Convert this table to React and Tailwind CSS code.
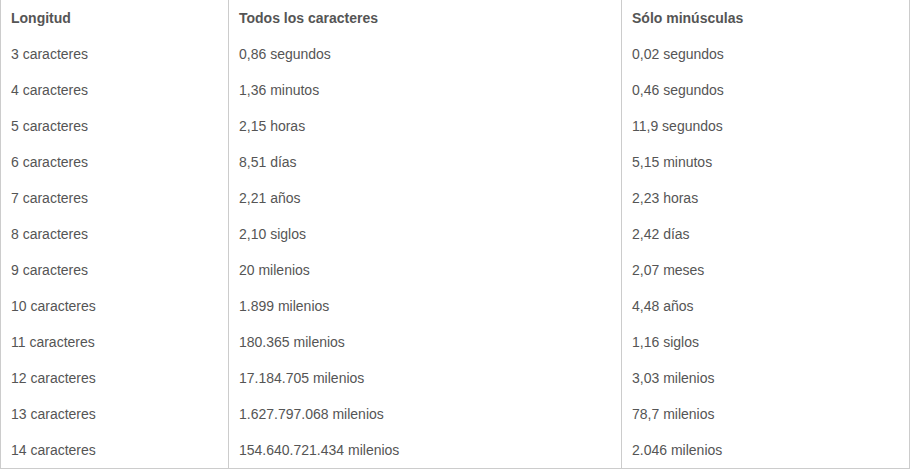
import React from 'react';

const rows = [
  ['3 caracteres', '0,86 segundos', '0,02 segundos'],
  ['4 caracteres', '1,36 minutos', '0,46 segundos'],
  ['5 caracteres', '2,15 horas', '11,9 segundos'],
  ['6 caracteres', '8,51 días', '5,15 minutos'],
  ['7 caracteres', '2,21 años', '2,23 horas'],
  ['8 caracteres', '2,10 siglos', '2,42 días'],
  ['9 caracteres', '20 milenios', '2,07 meses'],
  ['10 caracteres', '1.899 milenios', '4,48 años'],
  ['11 caracteres', '180.365 milenios', '1,16 siglos'],
  ['12 caracteres', '17.184.705 milenios', '3,03 milenios'],
  ['13 caracteres', '1.627.797.068 milenios', '78,7 milenios'],
  ['14 caracteres', '154.640.721.434 milenios', '2.046 milenios'],
];

const Row = ({ cells, head }) => (
  <div className={`grid grid-cols-[227px_393px_288px] h-9 ${head ? 'font-bold' : ''}`}>
    <div className="flex items-center pl-[10px]">{cells[0]}</div>
    <div className="flex items-center pl-[10px] border-l border-[#cccccc]">{cells[1]}</div>
    <div className="flex items-center pl-[10px] border-l border-[#cccccc]">{cells[2]}</div>
  </div>
);

export default function App() {
  return (
    <div className="w-[910px] bg-white text-[14px] text-[#555555] font-['Liberation_Sans',Arial,sans-serif]">
      <div className="border-l border-r border-b border-[#cccccc]">
        <Row head cells={['Longitud', 'Todos los caracteres', 'Sólo minúsculas']} />
        {rows.map((r) => (
          <Row key={r[0]} cells={r} />
        ))}
      </div>
    </div>
  );
}
